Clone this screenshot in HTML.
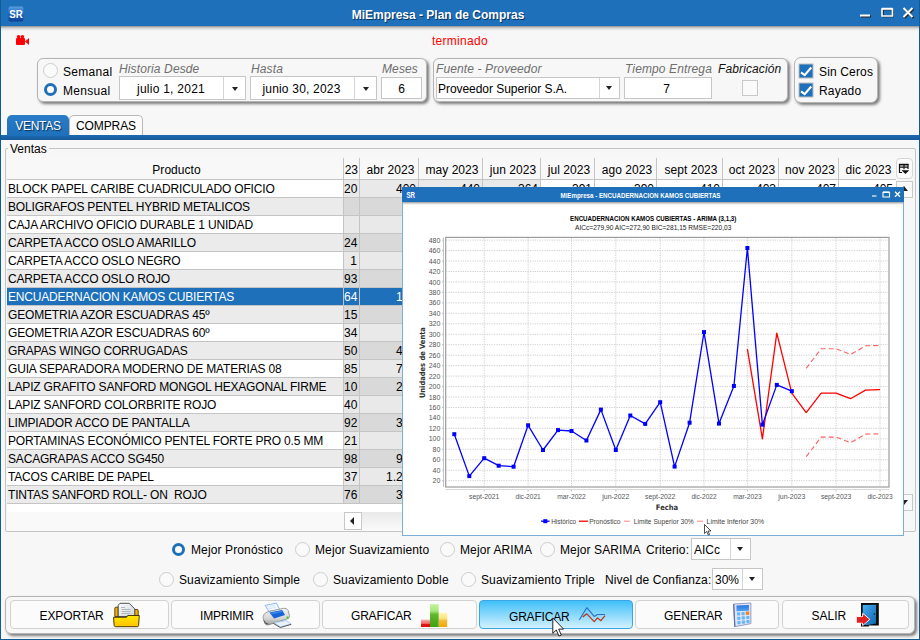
<!DOCTYPE html>
<html lang="es"><head><meta charset="utf-8"><title>MiEmpresa - Plan de Compras</title>
<style>
*{box-sizing:border-box;margin:0;padding:0}
html,body{width:920px;height:640px;overflow:hidden;background:#f7f7f7;font-family:"Liberation Sans",sans-serif;font-size:12px;color:#000}
.a{position:absolute}
#win{position:absolute;left:0;top:0;width:920px;height:640px;background:#f7f7f7;border-left:1px solid #0f5c92;border-right:1px solid #0f5c92;border-bottom:1px solid #0f5c92}
#tb{left:0;top:0;width:920px;height:26px;background:#1d70b9}
#tb .t{left:0;width:874px;top:7px;text-shadow:1px 1px 0 #0b3561;text-align:center;color:#fff;font-weight:bold;font-size:12px;line-height:16px}
.panel{border:1px solid #b4b4b4;border-radius:6px;background:#f7f7f7;box-shadow:2px 2px 3px rgba(0,0,0,.5)}
.fld{background:#fff;border:1px solid #c6c6c6;font-size:12px;line-height:21px;text-align:center;white-space:nowrap}
.lbl{letter-spacing:.12px;font-style:italic;color:#6e6e6e;font-size:12px;line-height:14px;white-space:nowrap}
.txt{font-size:12px;line-height:14px;white-space:nowrap}
.radio{width:15px;height:15px;border-radius:50%;border:1px solid #cdcdcd;background:#fafafa}
.radio.on{width:13.5px;height:13.5px;margin:.75px;border:3.200px solid #1d70b9;background:#fff}
.chk{width:16px;height:16px;background:#1d70b9;border:1px solid #165a96}
.arr{width:0;height:0;border-left:3.5px solid transparent;border-right:3.5px solid transparent;border-top:4px solid #222}
.r{left:0;width:889px;height:18px}
.c{top:0;height:17px;line-height:19px;text-align:right;padding-right:2px;white-space:pre;overflow:hidden}
.r{border-bottom:1px solid #c4c4c4}
</style></head><body>
<div id="win"></div>
<!-- title bar -->
<div id="tb" class="a" style="left:1px;width:918px"><div class="a t">MiEmpresa - Plan de Compras</div></div>
<div class="a" style="left:1px;top:26px;width:918px;height:5px;background:linear-gradient(#8a8a8a,#bdbdbd 25%,#e0e0e0 55%,#f7f7f7)"></div>
<svg class="a" style="left:8px;top:6px" width="16" height="16" viewBox="0 0 16 16">
<defs><linearGradient id="lg" x1="0" y1="0" x2="0" y2="1"><stop offset="0" stop-color="#5a9fe0"/><stop offset=".5" stop-color="#1e66c4"/><stop offset="1" stop-color="#0f3f96"/></linearGradient></defs>
<rect x=".5" y=".5" width="15" height="15" rx="2" fill="url(#lg)"/>
<text x="8" y="12" text-anchor="middle" font-family="Liberation Sans,sans-serif" font-weight="bold" font-size="11.5" fill="#fff" textLength="13.5" lengthAdjust="spacingAndGlyphs">SR</text>
</svg>
<svg class="a" style="left:856px;top:4px" width="62" height="18" viewBox="0 0 62 18">
<g fill="none" stroke="#222" stroke-width="2"><path d="M5 12.5h10" /><path d="M27 5.5h10v7h-10z" stroke-width="1.6"/><path d="M48.5 5l9 9M57.500 5l-9 9"/></g>
<g fill="none" stroke="#fff" stroke-width="2"><path d="M4 11.500h10" /><path d="M26 5h10.500v7h-10.500z" stroke-width="1.600"/><path d="M26 4.500h10.500" stroke-width="1.500"/><path d="M47.500 4l9 9M56.500 4l-9 9"/></g>
</svg>
<svg class="a" style="left:16px;top:35px" width="14" height="11" viewBox="0 0 14 11"><g fill="#f00"><circle cx="2.600" cy="1.800" r="1.800"/><circle cx="6.400" cy="1.800" r="1.800"/><rect x="0" y="3" width="9" height="7" rx="1"/><path d="M9 6.500L13 3v7z"/></g></svg>
<div class="a txt" style="left:432px;top:34px;color:#f00;letter-spacing:.28px">terminado</div>
<!--TITLEICONS-->
<div class="a panel" style="left:37px;top:58px;width:390px;height:44px"></div>
<div class="a radio" style="left:43px;top:63px"></div>
<div class="a radio on" style="left:43px;top:82px"></div>
<div class="a txt" style="left:63px;top:65px;letter-spacing:.3px">Semanal</div>
<div class="a txt" style="left:63px;top:84px;letter-spacing:.3px">Mensual</div>
<div class="a lbl" style="left:119px;top:62px">Historia Desde</div>
<div class="a fld" style="left:119px;top:76px;width:127px;height:24px"><div class="a" style="left:0;top:2px;width:102px;letter-spacing:.25px">julio 1, 2021</div><div class="a" style="left:103px;top:0;width:1px;height:22px;background:#d4d4d4"></div><div class="a arr" style="left:112px;top:10px"></div></div>
<div class="a lbl" style="left:251px;top:62px">Hasta</div>
<div class="a fld" style="left:250px;top:76px;width:127px;height:24px"><div class="a" style="left:0;top:2px;width:101px;letter-spacing:.2px">junio 30, 2023</div><div class="a" style="left:103px;top:0;width:1px;height:22px;background:#d4d4d4"></div><div class="a arr" style="left:112px;top:10px"></div></div>
<div class="a lbl" style="left:382px;top:62px">Meses</div>
<div class="a fld" style="left:381px;top:77px;width:41px;height:22px;line-height:22px">6</div>

<div class="a panel" style="left:433px;top:58px;width:355px;height:44px"></div>
<div class="a lbl" style="left:436px;top:62px">Fuente - Proveedor</div>
<div class="a fld" style="left:436px;top:77px;width:184px;height:22px;text-align:left;line-height:20px"><div class="a" style="left:1px;top:1px;letter-spacing:-.05px">Proveedor Superior S.A.</div><div class="a" style="left:162px;top:0;width:1px;height:20px;background:#d4d4d4"></div><div class="a arr" style="left:169px;top:8px"></div></div>
<div class="a lbl" style="left:625px;top:62px">Tiempo Entrega</div>
<div class="a fld" style="left:624px;top:77px;width:88px;height:22px;line-height:22px;padding-right:3px">7</div>
<div class="a lbl" style="left:718px;top:62px;color:#111">Fabricación</div>
<div class="a" style="left:742px;top:80px;width:16px;height:16px;border:1px solid #c8c8c8;background:#fafafa"></div>

<div class="a panel" style="left:794px;top:57px;width:84px;height:46px;border-radius:7px"></div>
<svg class="a" style="left:798px;top:63px" width="16" height="16" viewBox="0 0 16 16"><rect x=".5" y=".5" width="15" height="15" fill="#bcbcbc"/><rect x="1.500" y="1.500" width="13" height="13" fill="#1d70b9"/><path d="M3 9.300l3.700 2.800L13.200 4.500" fill="none" stroke="#fff" stroke-width="2.200"/></svg>
<svg class="a" style="left:798px;top:82px" width="16" height="16" viewBox="0 0 16 16"><rect x=".5" y=".5" width="15" height="15" fill="#bcbcbc"/><rect x="1.500" y="1.500" width="13" height="13" fill="#1d70b9"/><path d="M3 9.300l3.700 2.800L13.200 4.500" fill="none" stroke="#fff" stroke-width="2.200"/></svg>
<div class="a txt" style="left:819px;top:65px;letter-spacing:.15px">Sin Ceros</div>
<div class="a txt" style="left:819px;top:84px;letter-spacing:.15px">Rayado</div>
<!--TOP-->
<div class="a" style="left:1px;top:135px;width:918px;height:5px;background:linear-gradient(#1c6ab2,#195a9b)"></div>
<div class="a" style="left:7px;top:115px;width:62px;height:21px;background:linear-gradient(#2a7cc6,#1d70b9);border-radius:5px 5px 0 0;color:#fff;text-align:center;line-height:22px;letter-spacing:-.25px;text-shadow:1px 1px 1px #0a2f55">VENTAS</div>
<div class="a" style="left:69px;top:115px;width:74px;height:20px;background:#fbfbfb;border:1px solid #b8b8b8;border-bottom:none;border-radius:5px 5px 0 0;text-align:center;line-height:21px;letter-spacing:-.1px">COMPRAS</div>
<!--TABS-->
<div class="a" style="left:5px;top:148px;width:911px;height:384px;border:1px solid #c4c4c4;border-radius:2px"></div>
<div class="a txt" style="left:8px;top:142px;padding:0 2px;background:#f7f7f7">Ventas</div>
<div class="a" style="left:7px;top:158px;width:889px;height:22px;background:#f8f8f8;border-bottom:1px solid #c4c4c4"></div>
<div class="a txt" style="left:7px;top:163px;width:336px;text-align:center;overflow:hidden;padding-left:3px;letter-spacing:.05px">Producto</div>
<div class="a" style="left:343px;top:158px;width:1px;height:22px;background:#c4c4c4"></div>
<div class="a txt" style="left:343px;top:163px;width:15px;text-align:right;overflow:hidden">23</div>
<div class="a" style="left:359px;top:158px;width:1px;height:22px;background:#c4c4c4"></div>
<div class="a txt" style="left:360px;top:163px;width:58px;text-align:center;overflow:hidden;padding-left:3px;letter-spacing:.05px">abr 2023</div>
<div class="a" style="left:418px;top:158px;width:1px;height:22px;background:#c4c4c4"></div>
<div class="a txt" style="left:419px;top:163px;width:63px;text-align:center;overflow:hidden;padding-left:3px;letter-spacing:.05px">may 2023</div>
<div class="a" style="left:482px;top:158px;width:1px;height:22px;background:#c4c4c4"></div>
<div class="a txt" style="left:483px;top:163px;width:57px;text-align:center;overflow:hidden;padding-left:3px;letter-spacing:.05px">jun 2023</div>
<div class="a" style="left:540px;top:158px;width:1px;height:22px;background:#c4c4c4"></div>
<div class="a txt" style="left:541px;top:163px;width:53px;text-align:center;overflow:hidden;padding-left:3px;letter-spacing:.05px">jul 2023</div>
<div class="a" style="left:594px;top:158px;width:1px;height:22px;background:#c4c4c4"></div>
<div class="a txt" style="left:595px;top:163px;width:61px;text-align:center;overflow:hidden;padding-left:3px;letter-spacing:.05px">ago 2023</div>
<div class="a" style="left:656px;top:158px;width:1px;height:22px;background:#c4c4c4"></div>
<div class="a txt" style="left:657px;top:163px;width:65px;text-align:center;overflow:hidden;padding-left:3px;letter-spacing:.05px">sept 2023</div>
<div class="a" style="left:722px;top:158px;width:1px;height:22px;background:#c4c4c4"></div>
<div class="a txt" style="left:723px;top:163px;width:55px;text-align:center;overflow:hidden;padding-left:3px;letter-spacing:.05px">oct 2023</div>
<div class="a" style="left:778px;top:158px;width:1px;height:22px;background:#c4c4c4"></div>
<div class="a txt" style="left:779px;top:163px;width:59px;text-align:center;overflow:hidden;padding-left:3px;letter-spacing:.05px">nov 2023</div>
<div class="a" style="left:838px;top:158px;width:1px;height:22px;background:#c4c4c4"></div>
<div class="a txt" style="left:839px;top:163px;width:56px;text-align:center;overflow:hidden;padding-left:3px;letter-spacing:.05px">dic 2023</div>
<div class="a" style="left:7px;top:180px;width:889px;height:332px;background:#fff"></div>
<div class="a" style="left:7px;top:512px;width:889px;height:19px;background:#f9f9f9"></div>
<div class="a" style="left:362px;top:512px;width:534px;height:19px;background:linear-gradient(#e9e9e9,#fbfbfb)"></div>
<div class="a" style="left:7px;top:180px;width:889px;height:324px;overflow:hidden" id="tbl">
<div class="a r" style="top:0px;color:#000">
<div class="a c" style="left:0;width:336px;background:#fff;text-align:left;padding-left:1px;letter-spacing:-.18px">BLOCK PAPEL CARIBE CUADRICULADO OFICIO</div>
<div class="a c" style="left:337px;width:15px;background:#e9e9e9">20</div>
<div class="a c" style="left:353px;width:58px;background:#e9e9e9">400</div>
<div class="a c" style="left:412px;width:63px;background:#e9e9e9">440</div>
<div class="a c" style="left:476px;width:57px;background:#e9e9e9">364</div>
<div class="a c" style="left:534px;width:53px;background:#fff">391</div>
<div class="a c" style="left:588px;width:61px;background:#fff">390</div>
<div class="a c" style="left:650px;width:65px;background:#fff">410</div>
<div class="a c" style="left:716px;width:55px;background:#fff">403</div>
<div class="a c" style="left:772px;width:59px;background:#fff">407</div>
<div class="a c" style="left:832px;width:56px;background:#fff">405</div>
</div>
<div class="a r" style="top:18px;color:#000">
<div class="a c" style="left:0;width:336px;background:#ebebeb;text-align:left;padding-left:1px;letter-spacing:-.18px">BOLIGRAFOS PENTEL HYBRID METALICOS</div>
<div class="a c" style="left:337px;width:15px;background:#d9d9d9"></div>
<div class="a c" style="left:353px;width:58px;background:#d9d9d9"></div>
<div class="a c" style="left:412px;width:63px;background:#d9d9d9"></div>
<div class="a c" style="left:476px;width:57px;background:#d9d9d9"></div>
<div class="a c" style="left:534px;width:53px;background:#ebebeb"></div>
<div class="a c" style="left:588px;width:61px;background:#ebebeb"></div>
<div class="a c" style="left:650px;width:65px;background:#ebebeb"></div>
<div class="a c" style="left:716px;width:55px;background:#ebebeb"></div>
<div class="a c" style="left:772px;width:59px;background:#ebebeb"></div>
<div class="a c" style="left:832px;width:56px;background:#ebebeb"></div>
</div>
<div class="a r" style="top:36px;color:#000">
<div class="a c" style="left:0;width:336px;background:#fff;text-align:left;padding-left:1px;letter-spacing:-.18px">CAJA ARCHIVO OFICIO DURABLE 1 UNIDAD</div>
<div class="a c" style="left:337px;width:15px;background:#e9e9e9"></div>
<div class="a c" style="left:353px;width:58px;background:#e9e9e9"></div>
<div class="a c" style="left:412px;width:63px;background:#e9e9e9"></div>
<div class="a c" style="left:476px;width:57px;background:#e9e9e9"></div>
<div class="a c" style="left:534px;width:53px;background:#fff"></div>
<div class="a c" style="left:588px;width:61px;background:#fff"></div>
<div class="a c" style="left:650px;width:65px;background:#fff"></div>
<div class="a c" style="left:716px;width:55px;background:#fff"></div>
<div class="a c" style="left:772px;width:59px;background:#fff"></div>
<div class="a c" style="left:832px;width:56px;background:#fff"></div>
</div>
<div class="a r" style="top:54px;color:#000">
<div class="a c" style="left:0;width:336px;background:#ebebeb;text-align:left;padding-left:1px;letter-spacing:-.18px">CARPETA ACCO OSLO AMARILLO</div>
<div class="a c" style="left:337px;width:15px;background:#d9d9d9">24</div>
<div class="a c" style="left:353px;width:58px;background:#d9d9d9"></div>
<div class="a c" style="left:412px;width:63px;background:#d9d9d9"></div>
<div class="a c" style="left:476px;width:57px;background:#d9d9d9"></div>
<div class="a c" style="left:534px;width:53px;background:#ebebeb"></div>
<div class="a c" style="left:588px;width:61px;background:#ebebeb"></div>
<div class="a c" style="left:650px;width:65px;background:#ebebeb"></div>
<div class="a c" style="left:716px;width:55px;background:#ebebeb"></div>
<div class="a c" style="left:772px;width:59px;background:#ebebeb"></div>
<div class="a c" style="left:832px;width:56px;background:#ebebeb"></div>
</div>
<div class="a r" style="top:72px;color:#000">
<div class="a c" style="left:0;width:336px;background:#fff;text-align:left;padding-left:1px;letter-spacing:-.18px">CARPETA ACCO OSLO NEGRO</div>
<div class="a c" style="left:337px;width:15px;background:#e9e9e9">1</div>
<div class="a c" style="left:353px;width:58px;background:#e9e9e9"></div>
<div class="a c" style="left:412px;width:63px;background:#e9e9e9"></div>
<div class="a c" style="left:476px;width:57px;background:#e9e9e9"></div>
<div class="a c" style="left:534px;width:53px;background:#fff"></div>
<div class="a c" style="left:588px;width:61px;background:#fff"></div>
<div class="a c" style="left:650px;width:65px;background:#fff"></div>
<div class="a c" style="left:716px;width:55px;background:#fff"></div>
<div class="a c" style="left:772px;width:59px;background:#fff"></div>
<div class="a c" style="left:832px;width:56px;background:#fff"></div>
</div>
<div class="a r" style="top:90px;color:#000">
<div class="a c" style="left:0;width:336px;background:#ebebeb;text-align:left;padding-left:1px;letter-spacing:-.18px">CARPETA ACCO OSLO ROJO</div>
<div class="a c" style="left:337px;width:15px;background:#d9d9d9">93</div>
<div class="a c" style="left:353px;width:58px;background:#d9d9d9"></div>
<div class="a c" style="left:412px;width:63px;background:#d9d9d9"></div>
<div class="a c" style="left:476px;width:57px;background:#d9d9d9"></div>
<div class="a c" style="left:534px;width:53px;background:#ebebeb"></div>
<div class="a c" style="left:588px;width:61px;background:#ebebeb"></div>
<div class="a c" style="left:650px;width:65px;background:#ebebeb"></div>
<div class="a c" style="left:716px;width:55px;background:#ebebeb"></div>
<div class="a c" style="left:772px;width:59px;background:#ebebeb"></div>
<div class="a c" style="left:832px;width:56px;background:#ebebeb"></div>
</div>
<div class="a r" style="top:108px;color:#fff">
<div class="a c" style="left:0;width:336px;background:#1d70b9;text-align:left;padding-left:1px;letter-spacing:-.18px">ENCUADERNACION KAMOS CUBIERTAS</div>
<div class="a c" style="left:337px;width:15px;background:#1d70b9">64</div>
<div class="a c" style="left:353px;width:58px;background:#1d70b9">128</div>
<div class="a c" style="left:412px;width:63px;background:#1d70b9"></div>
<div class="a c" style="left:476px;width:57px;background:#1d70b9"></div>
<div class="a c" style="left:534px;width:53px;background:#1d70b9"></div>
<div class="a c" style="left:588px;width:61px;background:#1d70b9"></div>
<div class="a c" style="left:650px;width:65px;background:#1d70b9"></div>
<div class="a c" style="left:716px;width:55px;background:#1d70b9"></div>
<div class="a c" style="left:772px;width:59px;background:#1d70b9"></div>
<div class="a c" style="left:832px;width:56px;background:#1d70b9"></div>
</div>
<div class="a r" style="top:126px;color:#000">
<div class="a c" style="left:0;width:336px;background:#ebebeb;text-align:left;padding-left:1px;letter-spacing:-.18px">GEOMETRIA AZOR ESCUADRAS 45º</div>
<div class="a c" style="left:337px;width:15px;background:#d9d9d9">15</div>
<div class="a c" style="left:353px;width:58px;background:#d9d9d9"></div>
<div class="a c" style="left:412px;width:63px;background:#d9d9d9"></div>
<div class="a c" style="left:476px;width:57px;background:#d9d9d9"></div>
<div class="a c" style="left:534px;width:53px;background:#ebebeb"></div>
<div class="a c" style="left:588px;width:61px;background:#ebebeb"></div>
<div class="a c" style="left:650px;width:65px;background:#ebebeb"></div>
<div class="a c" style="left:716px;width:55px;background:#ebebeb"></div>
<div class="a c" style="left:772px;width:59px;background:#ebebeb"></div>
<div class="a c" style="left:832px;width:56px;background:#ebebeb"></div>
</div>
<div class="a r" style="top:144px;color:#000">
<div class="a c" style="left:0;width:336px;background:#fff;text-align:left;padding-left:1px;letter-spacing:-.18px">GEOMETRIA AZOR ESCUADRAS 60º</div>
<div class="a c" style="left:337px;width:15px;background:#e9e9e9">34</div>
<div class="a c" style="left:353px;width:58px;background:#e9e9e9"></div>
<div class="a c" style="left:412px;width:63px;background:#e9e9e9"></div>
<div class="a c" style="left:476px;width:57px;background:#e9e9e9"></div>
<div class="a c" style="left:534px;width:53px;background:#fff"></div>
<div class="a c" style="left:588px;width:61px;background:#fff"></div>
<div class="a c" style="left:650px;width:65px;background:#fff"></div>
<div class="a c" style="left:716px;width:55px;background:#fff"></div>
<div class="a c" style="left:772px;width:59px;background:#fff"></div>
<div class="a c" style="left:832px;width:56px;background:#fff"></div>
</div>
<div class="a r" style="top:162px;color:#000">
<div class="a c" style="left:0;width:336px;background:#ebebeb;text-align:left;padding-left:1px;letter-spacing:-.18px">GRAPAS WINGO CORRUGADAS</div>
<div class="a c" style="left:337px;width:15px;background:#d9d9d9">50</div>
<div class="a c" style="left:353px;width:58px;background:#d9d9d9">462</div>
<div class="a c" style="left:412px;width:63px;background:#d9d9d9"></div>
<div class="a c" style="left:476px;width:57px;background:#d9d9d9"></div>
<div class="a c" style="left:534px;width:53px;background:#ebebeb"></div>
<div class="a c" style="left:588px;width:61px;background:#ebebeb"></div>
<div class="a c" style="left:650px;width:65px;background:#ebebeb"></div>
<div class="a c" style="left:716px;width:55px;background:#ebebeb"></div>
<div class="a c" style="left:772px;width:59px;background:#ebebeb"></div>
<div class="a c" style="left:832px;width:56px;background:#ebebeb"></div>
</div>
<div class="a r" style="top:180px;color:#000">
<div class="a c" style="left:0;width:336px;background:#fff;text-align:left;padding-left:1px;letter-spacing:-.18px">GUIA SEPARADORA MODERNO DE MATERIAS 08</div>
<div class="a c" style="left:337px;width:15px;background:#e9e9e9">85</div>
<div class="a c" style="left:353px;width:58px;background:#e9e9e9">713</div>
<div class="a c" style="left:412px;width:63px;background:#e9e9e9"></div>
<div class="a c" style="left:476px;width:57px;background:#e9e9e9"></div>
<div class="a c" style="left:534px;width:53px;background:#fff"></div>
<div class="a c" style="left:588px;width:61px;background:#fff"></div>
<div class="a c" style="left:650px;width:65px;background:#fff"></div>
<div class="a c" style="left:716px;width:55px;background:#fff"></div>
<div class="a c" style="left:772px;width:59px;background:#fff"></div>
<div class="a c" style="left:832px;width:56px;background:#fff"></div>
</div>
<div class="a r" style="top:198px;color:#000">
<div class="a c" style="left:0;width:336px;background:#ebebeb;text-align:left;padding-left:1px;letter-spacing:-.18px">LAPIZ GRAFITO SANFORD MONGOL HEXAGONAL FIRME</div>
<div class="a c" style="left:337px;width:15px;background:#d9d9d9">10</div>
<div class="a c" style="left:353px;width:58px;background:#d9d9d9">251</div>
<div class="a c" style="left:412px;width:63px;background:#d9d9d9"></div>
<div class="a c" style="left:476px;width:57px;background:#d9d9d9"></div>
<div class="a c" style="left:534px;width:53px;background:#ebebeb"></div>
<div class="a c" style="left:588px;width:61px;background:#ebebeb"></div>
<div class="a c" style="left:650px;width:65px;background:#ebebeb"></div>
<div class="a c" style="left:716px;width:55px;background:#ebebeb"></div>
<div class="a c" style="left:772px;width:59px;background:#ebebeb"></div>
<div class="a c" style="left:832px;width:56px;background:#ebebeb"></div>
</div>
<div class="a r" style="top:216px;color:#000">
<div class="a c" style="left:0;width:336px;background:#fff;text-align:left;padding-left:1px;letter-spacing:-.18px">LAPIZ SANFORD COLORBRITE ROJO</div>
<div class="a c" style="left:337px;width:15px;background:#e9e9e9">40</div>
<div class="a c" style="left:353px;width:58px;background:#e9e9e9"></div>
<div class="a c" style="left:412px;width:63px;background:#e9e9e9"></div>
<div class="a c" style="left:476px;width:57px;background:#e9e9e9"></div>
<div class="a c" style="left:534px;width:53px;background:#fff"></div>
<div class="a c" style="left:588px;width:61px;background:#fff"></div>
<div class="a c" style="left:650px;width:65px;background:#fff"></div>
<div class="a c" style="left:716px;width:55px;background:#fff"></div>
<div class="a c" style="left:772px;width:59px;background:#fff"></div>
<div class="a c" style="left:832px;width:56px;background:#fff"></div>
</div>
<div class="a r" style="top:234px;color:#000">
<div class="a c" style="left:0;width:336px;background:#ebebeb;text-align:left;padding-left:1px;letter-spacing:-.18px">LIMPIADOR ACCO DE PANTALLA</div>
<div class="a c" style="left:337px;width:15px;background:#d9d9d9">92</div>
<div class="a c" style="left:353px;width:58px;background:#d9d9d9">318</div>
<div class="a c" style="left:412px;width:63px;background:#d9d9d9"></div>
<div class="a c" style="left:476px;width:57px;background:#d9d9d9"></div>
<div class="a c" style="left:534px;width:53px;background:#ebebeb"></div>
<div class="a c" style="left:588px;width:61px;background:#ebebeb"></div>
<div class="a c" style="left:650px;width:65px;background:#ebebeb"></div>
<div class="a c" style="left:716px;width:55px;background:#ebebeb"></div>
<div class="a c" style="left:772px;width:59px;background:#ebebeb"></div>
<div class="a c" style="left:832px;width:56px;background:#ebebeb"></div>
</div>
<div class="a r" style="top:252px;color:#000">
<div class="a c" style="left:0;width:336px;background:#fff;text-align:left;padding-left:1px;letter-spacing:-.18px">PORTAMINAS ECONÓMICO PENTEL FORTE PRO 0.5 MM</div>
<div class="a c" style="left:337px;width:15px;background:#e9e9e9">21</div>
<div class="a c" style="left:353px;width:58px;background:#e9e9e9"></div>
<div class="a c" style="left:412px;width:63px;background:#e9e9e9"></div>
<div class="a c" style="left:476px;width:57px;background:#e9e9e9"></div>
<div class="a c" style="left:534px;width:53px;background:#fff"></div>
<div class="a c" style="left:588px;width:61px;background:#fff"></div>
<div class="a c" style="left:650px;width:65px;background:#fff"></div>
<div class="a c" style="left:716px;width:55px;background:#fff"></div>
<div class="a c" style="left:772px;width:59px;background:#fff"></div>
<div class="a c" style="left:832px;width:56px;background:#fff"></div>
</div>
<div class="a r" style="top:270px;color:#000">
<div class="a c" style="left:0;width:336px;background:#ebebeb;text-align:left;padding-left:1px;letter-spacing:-.18px">SACAGRAPAS ACCO SG450</div>
<div class="a c" style="left:337px;width:15px;background:#d9d9d9">98</div>
<div class="a c" style="left:353px;width:58px;background:#d9d9d9">956</div>
<div class="a c" style="left:412px;width:63px;background:#d9d9d9"></div>
<div class="a c" style="left:476px;width:57px;background:#d9d9d9"></div>
<div class="a c" style="left:534px;width:53px;background:#ebebeb"></div>
<div class="a c" style="left:588px;width:61px;background:#ebebeb"></div>
<div class="a c" style="left:650px;width:65px;background:#ebebeb"></div>
<div class="a c" style="left:716px;width:55px;background:#ebebeb"></div>
<div class="a c" style="left:772px;width:59px;background:#ebebeb"></div>
<div class="a c" style="left:832px;width:56px;background:#ebebeb"></div>
</div>
<div class="a r" style="top:288px;color:#000">
<div class="a c" style="left:0;width:336px;background:#fff;text-align:left;padding-left:1px;letter-spacing:-.18px">TACOS CARIBE DE PAPEL</div>
<div class="a c" style="left:337px;width:15px;background:#e9e9e9">37</div>
<div class="a c" style="left:353px;width:58px;background:#e9e9e9">1.226</div>
<div class="a c" style="left:412px;width:63px;background:#e9e9e9"></div>
<div class="a c" style="left:476px;width:57px;background:#e9e9e9"></div>
<div class="a c" style="left:534px;width:53px;background:#fff"></div>
<div class="a c" style="left:588px;width:61px;background:#fff"></div>
<div class="a c" style="left:650px;width:65px;background:#fff"></div>
<div class="a c" style="left:716px;width:55px;background:#fff"></div>
<div class="a c" style="left:772px;width:59px;background:#fff"></div>
<div class="a c" style="left:832px;width:56px;background:#fff"></div>
</div>
<div class="a r" style="top:306px;color:#000">
<div class="a c" style="left:0;width:336px;background:#ebebeb;text-align:left;padding-left:1px;letter-spacing:-.18px">TINTAS SANFORD ROLL- ON  ROJO</div>
<div class="a c" style="left:337px;width:15px;background:#d9d9d9">76</div>
<div class="a c" style="left:353px;width:58px;background:#d9d9d9">347</div>
<div class="a c" style="left:412px;width:63px;background:#d9d9d9"></div>
<div class="a c" style="left:476px;width:57px;background:#d9d9d9"></div>
<div class="a c" style="left:534px;width:53px;background:#ebebeb"></div>
<div class="a c" style="left:588px;width:61px;background:#ebebeb"></div>
<div class="a c" style="left:650px;width:65px;background:#ebebeb"></div>
<div class="a c" style="left:716px;width:55px;background:#ebebeb"></div>
<div class="a c" style="left:772px;width:59px;background:#ebebeb"></div>
<div class="a c" style="left:832px;width:56px;background:#ebebeb"></div>
</div>
<div class="a" style="left:336px;top:0;width:1px;height:324px;background:#c4c4c4"></div>
<div class="a" style="left:352px;top:0;width:1px;height:324px;background:#c4c4c4"></div>
<div class="a" style="left:411px;top:0;width:1px;height:324px;background:#c4c4c4"></div>
<div class="a" style="left:475px;top:0;width:1px;height:324px;background:#c4c4c4"></div>
<div class="a" style="left:533px;top:0;width:1px;height:324px;background:#c4c4c4"></div>
<div class="a" style="left:587px;top:0;width:1px;height:324px;background:#c4c4c4"></div>
<div class="a" style="left:649px;top:0;width:1px;height:324px;background:#c4c4c4"></div>
<div class="a" style="left:715px;top:0;width:1px;height:324px;background:#c4c4c4"></div>
<div class="a" style="left:771px;top:0;width:1px;height:324px;background:#c4c4c4"></div>
<div class="a" style="left:831px;top:0;width:1px;height:324px;background:#c4c4c4"></div>
</div>
<div class="a" style="left:344px;top:512px;width:18px;height:18px;background:#fff;border:1px solid #c8c8c8"><div class="a" style="left:5px;top:4px;width:0;height:0;border-top:4px solid transparent;border-bottom:4px solid transparent;border-right:4.500px solid #222"></div></div>
<div class="a" style="left:896px;top:158px;width:17px;height:21px;background:#fcfcfc;border:1px solid #d6d6d6;border-radius:4px"></div>
<svg class="a" style="left:896px;top:158px" width="18" height="22" viewBox="896 158 18 22"><path d="M899.500 173V164.700h8.500v4.300M899.500 167.200h8.500M904 164.700v4.500M899.500 172.500h2.500" fill="none" stroke="#111" stroke-width="1.200"/><path d="M899 164.500h9.500" stroke="#111" stroke-width="1.500"/><path d="M901.500 170.200h7.800l-3.900 3.900z" fill="#111"/></svg>
<div class="a" style="left:896px;top:181px;width:17px;height:17px;background:#fafafa;border:1px solid #c8c8c8"><div class="a" style="left:3px;top:4px;width:0;height:0;border-left:4px solid transparent;border-right:4px solid transparent;border-bottom:5px solid #222"></div></div>
<div class="a" style="left:896px;top:494px;width:17px;height:17px;background:#fafafa;border:1px solid #c8c8c8"><div class="a" style="left:3px;top:5px;width:0;height:0;border-left:4px solid transparent;border-right:4px solid transparent;border-top:5px solid #222"></div></div>
<!--TABLE-->
<!--POPUP_START-->
<div class="a" style="left:402px;top:187px;width:502px;height:349px;background:#fff;border:1px solid #7aaedb;border-top:none"></div>
<div class="a" style="left:402px;top:187px;width:502px;height:15px;background:#1d70b9"></div>
<div class="a" style="left:403px;top:202px;width:500px;height:3px;background:linear-gradient(#9a9a9a,#d8d8d8 50%,#fff)"></div>
<svg class="a" style="left:402px;top:187px" width="502" height="349" viewBox="402 187 502 349" font-family="Liberation Sans,sans-serif">
<rect x="406" y="190.500" width="9.500" height="8.500" rx="1" fill="#2a6cc8"/><text x="410.700" y="198" font-size="8.500" font-weight="bold" fill="#fff" text-anchor="middle" textLength="8.500" lengthAdjust="spacingAndGlyphs">SR</text>
<text x="560.500" y="198.200" font-size="7.600" font-weight="bold" fill="#fff" textLength="160" lengthAdjust="spacingAndGlyphs">MiEmpresa - ENCUADERNACION KAMOS CUBIERTAS</text>
<g stroke="#fff" fill="none" stroke-width="1.100"><path d="M872 196h4.500"/><path d="M883 192.500h6.500v4.500h-6.500z"/><path d="M883 192h6.500" stroke-width="1.300"/><path d="M895 191.800l5 5M900 191.800l-5 5" stroke-width="1.300"/></g>
<text x="653.200" y="220.800" font-size="7.600" font-weight="bold" fill="#000" text-anchor="middle" textLength="166.300" lengthAdjust="spacingAndGlyphs">ENCUADERNACION KAMOS CUBIERTAS - ARIMA (3,1,3)</text>
<text x="653.200" y="230.200" font-size="7.300" fill="#222" text-anchor="middle" textLength="156.300" lengthAdjust="spacingAndGlyphs">AICc=279,90 AIC=272,90 BIC=281,15 RMSE=220,03</text>
<rect x="445.700" y="237.400" width="443.300" height="249.600" fill="#fff" stroke="#9c9c9c" stroke-width="1.200"/>
<path d="M446 480.7H889 M446 470.2H889 M446 459.8H889 M446 449.3H889 M446 438.9H889 M446 428.4H889 M446 417.9H889 M446 407.5H889 M446 397.0H889 M446 386.6H889 M446 376.1H889 M446 365.6H889 M446 355.2H889 M446 344.7H889 M446 334.3H889 M446 323.8H889 M446 313.3H889 M446 302.9H889 M446 292.4H889 M446 282.0H889 M446 271.5H889 M446 261.0H889 M446 250.6H889 M446 240.1H889 M484.2 238V487 M528.1 238V487 M571.5 238V487 M615.8 238V487 M660.2 238V487 M704.0 238V487 M747.4 238V487 M791.8 238V487 M836.1 238V487 M880.0 238V487" stroke="#c8c8c8" stroke-width=".9" stroke-dasharray="1.200 1.200" fill="none"/>
<path d="M443.500 237.500V487" stroke="#c4c4c4" stroke-width="1" fill="none"/><path d="M445.500 489.500H889" stroke="#d8d8d8" stroke-width="1" fill="none"/>
<path d="M442 480.7h1.500 M442 470.2h1.500 M442 459.8h1.500 M442 449.3h1.500 M442 438.9h1.500 M442 428.4h1.500 M442 417.9h1.500 M442 407.5h1.500 M442 397.0h1.500 M442 386.6h1.500 M442 376.1h1.500 M442 365.6h1.500 M442 355.2h1.500 M442 344.7h1.500 M442 334.3h1.500 M442 323.8h1.500 M442 313.3h1.500 M442 302.9h1.500 M442 292.4h1.500 M442 282.0h1.500 M442 271.5h1.500 M442 261.0h1.500 M442 250.6h1.500 M442 240.1h1.500 M484.2 490v1.500 M528.1 490v1.500 M571.5 490v1.500 M615.8 490v1.500 M660.2 490v1.500 M704.0 490v1.500 M747.4 490v1.500 M791.8 490v1.500 M836.1 490v1.500 M880.0 490v1.500" stroke="#b0b0b0" stroke-width=".8" fill="none"/>
<g font-size="7" fill="#555" text-anchor="end">
<text x="440.400" y="483.2">20</text>
<text x="440.400" y="472.7">40</text>
<text x="440.400" y="462.3">60</text>
<text x="440.400" y="451.8">80</text>
<text x="440.400" y="441.4">100</text>
<text x="440.400" y="430.9">120</text>
<text x="440.400" y="420.4">140</text>
<text x="440.400" y="410.0">160</text>
<text x="440.400" y="399.5">180</text>
<text x="440.400" y="389.1">200</text>
<text x="440.400" y="378.6">220</text>
<text x="440.400" y="368.1">240</text>
<text x="440.400" y="357.7">260</text>
<text x="440.400" y="347.2">280</text>
<text x="440.400" y="336.8">300</text>
<text x="440.400" y="326.3">320</text>
<text x="440.400" y="315.8">340</text>
<text x="440.400" y="305.4">360</text>
<text x="440.400" y="294.9">380</text>
<text x="440.400" y="284.5">400</text>
<text x="440.400" y="274.0">420</text>
<text x="440.400" y="263.5">440</text>
<text x="440.400" y="253.1">460</text>
<text x="440.400" y="242.6">480</text>
</g>
<g font-size="7" fill="#555" text-anchor="middle">
<text x="484.2" y="499.200" textLength="30.4" lengthAdjust="spacingAndGlyphs">sept-2021</text>
<text x="528.1" y="499.200" textLength="25.2" lengthAdjust="spacingAndGlyphs">dic-2021</text>
<text x="571.5" y="499.200" textLength="28.5" lengthAdjust="spacingAndGlyphs">mar-2022</text>
<text x="615.8" y="499.200" textLength="27" lengthAdjust="spacingAndGlyphs">jun-2022</text>
<text x="660.2" y="499.200" textLength="30.4" lengthAdjust="spacingAndGlyphs">sept-2022</text>
<text x="704.0" y="499.200" textLength="25.2" lengthAdjust="spacingAndGlyphs">dic-2022</text>
<text x="747.4" y="499.200" textLength="28.5" lengthAdjust="spacingAndGlyphs">mar-2023</text>
<text x="791.8" y="499.200" textLength="27" lengthAdjust="spacingAndGlyphs">jun-2023</text>
<text x="836.1" y="499.200" textLength="30.4" lengthAdjust="spacingAndGlyphs">sept-2023</text>
<text x="880.0" y="499.200" textLength="25.2" lengthAdjust="spacingAndGlyphs">dic-2023</text>
</g>
<text x="667" y="509.500" font-family="DejaVu Sans Condensed,DejaVu Sans,sans-serif" font-size="7.500" font-weight="bold" fill="#333" text-anchor="middle" textLength="22.300" lengthAdjust="spacingAndGlyphs">Fecha</text>
<text transform="translate(425.200 362.600) rotate(-90)" font-family="DejaVu Sans Condensed,DejaVu Sans,sans-serif" font-size="7.500" font-weight="bold" fill="#333" text-anchor="middle" textLength="71" lengthAdjust="spacingAndGlyphs">Unidades de Venta</text>
<path d="M806.2 368.3 L821.2 348.8 L836.1 348.8 L850.6 354.4 L865.5 345.8 L880.0 345.5" stroke="#ff6060" stroke-width="1.100" stroke-dasharray="5 3" fill="none"/>
<path d="M806.2 456.6 L821.2 437.1 L836.1 437.1 L850.6 442.7 L865.5 434.1 L880.0 433.8" stroke="#ff6060" stroke-width="1.100" stroke-dasharray="5 3" fill="none"/>
<path d="M747.4 349.2 L762.4 438.8 L776.8 333.1 L791.8 393.1 L806.2 412.6 L821.2 393.1 L836.1 393.1 L850.6 398.7 L865.5 390.1 L880.0 389.7" stroke="#f00" stroke-width="1.300" fill="none" stroke-linejoin="round"/>
<path d="M454.3 434.2 L469.3 476.1 L484.2 458.2 L498.7 465.7 L513.6 466.7 L528.1 425.3 L543.0 450.0 L558.0 430.1 L571.5 431.0 L586.4 440.5 L600.9 409.6 L615.8 450.0 L630.3 415.5 L645.2 423.9 L660.2 402.2 L674.6 466.6 L689.6 422.7 L704.0 332.1 L719.0 423.6 L733.9 386.0 L747.4 248.0 L762.4 424.7 L776.8 384.9 L791.8 391.2" stroke="#00f" stroke-width="1.300" fill="none" stroke-linejoin="round"/>
<g fill="#00f"><rect x="452.3" y="432.2" width="4" height="4"/><rect x="467.3" y="474.1" width="4" height="4"/><rect x="482.2" y="456.2" width="4" height="4"/><rect x="496.7" y="463.7" width="4" height="4"/><rect x="511.6" y="464.7" width="4" height="4"/><rect x="526.1" y="423.3" width="4" height="4"/><rect x="541.0" y="448.0" width="4" height="4"/><rect x="556.0" y="428.1" width="4" height="4"/><rect x="569.5" y="429.0" width="4" height="4"/><rect x="584.4" y="438.5" width="4" height="4"/><rect x="598.9" y="407.6" width="4" height="4"/><rect x="613.8" y="448.0" width="4" height="4"/><rect x="628.3" y="413.5" width="4" height="4"/><rect x="643.2" y="421.9" width="4" height="4"/><rect x="658.2" y="400.2" width="4" height="4"/><rect x="672.6" y="464.6" width="4" height="4"/><rect x="687.6" y="420.7" width="4" height="4"/><rect x="702.0" y="330.1" width="4" height="4"/><rect x="717.0" y="421.6" width="4" height="4"/><rect x="731.9" y="384.0" width="4" height="4"/><rect x="745.4" y="246.0" width="4" height="4"/><rect x="760.4" y="422.7" width="4" height="4"/><rect x="774.8" y="382.9" width="4" height="4"/><rect x="789.8" y="389.2" width="4" height="4"/></g>
<path d="M541 521.200h8.600" stroke="#00f" stroke-width="1.300"/><rect x="543.300" y="519.200" width="4" height="4" fill="#00f"/>
<path d="M579 521.200h9" stroke="#f00" stroke-width="1.300"/>
<path d="M623.800 521.200h6M697 521.200h6" stroke="#ff8080" stroke-width="1"/>
<g font-size="7" fill="#444">
<text x="551.200" y="523.700" textLength="25" lengthAdjust="spacingAndGlyphs">Histórico</text>
<text x="589.200" y="523.700" textLength="31.300" lengthAdjust="spacingAndGlyphs">Pronóstico</text>
<text x="633.800" y="523.700" textLength="60" lengthAdjust="spacingAndGlyphs">Limite Superior 30%</text>
<text x="706.600" y="523.700" textLength="57.600" lengthAdjust="spacingAndGlyphs">Limite Inferior 30%</text>
</g>
<path d="M704.500 524.500v9l2.200-2 1.600 3.500 1.300-.6-1.600-3.400h3z" fill="#fff" stroke="#000" stroke-width=".7"/>
</svg>
<!--POPUP_END-->
<div class="a radio on" style="left:171.0px;top:542.0px"></div>
<div class="a txt" style="left:191px;top:542.5px;letter-spacing:.12px">Mejor Pronóstico</div>
<div class="a radio" style="left:295.0px;top:542.0px"></div>
<div class="a txt" style="left:315px;top:542.5px;letter-spacing:.12px">Mejor Suavizamiento</div>
<div class="a radio" style="left:440.0px;top:542.0px"></div>
<div class="a txt" style="left:460px;top:542.5px;letter-spacing:.12px">Mejor ARIMA</div>
<div class="a radio" style="left:539.5px;top:542.0px"></div>
<div class="a txt" style="left:560px;top:542.5px;letter-spacing:.12px">Mejor SARIMA</div>
<div class="a txt" style="left:646px;top:542.5px;letter-spacing:.12px">Criterio:</div>
<div class="a fld" style="left:691px;top:538px;width:60px;height:22px;line-height:20px;text-align:left"><div class="a" style="left:2px;top:1px">AICc</div><div class="a" style="left:38px;top:0;width:1px;height:20px;background:#d4d4d4"></div><div class="a arr" style="left:45px;top:8px"></div></div>
<div class="a radio" style="left:159.0px;top:572.0px"></div>
<div class="a txt" style="left:179px;top:572.5px;letter-spacing:.12px">Suavizamiento Simple</div>
<div class="a radio" style="left:313.0px;top:572.0px"></div>
<div class="a txt" style="left:333px;top:572.5px;letter-spacing:.12px">Suavizamiento Doble</div>
<div class="a radio" style="left:461.0px;top:572.0px"></div>
<div class="a txt" style="left:481px;top:572.5px;letter-spacing:.12px">Suavizamiento Triple</div>
<div class="a txt" style="left:605px;top:572.5px;letter-spacing:.12px">Nivel de Confianza:</div>
<div class="a fld" style="left:712px;top:568px;width:51px;height:22px;line-height:20px;text-align:left"><div class="a" style="left:2px;top:1px">30%</div><div class="a" style="left:29px;top:0;width:1px;height:20px;background:#d4d4d4"></div><div class="a arr" style="left:36px;top:8px"></div></div>
<div class="a panel" style="left:5px;top:596px;width:910px;height:38px;border-radius:6px"></div>
<div class="a" style="left:10px;top:600px;width:159px;height:29px;border-radius:4px;background:#fbfbfb;border:1px solid #d2d2d2"></div>
<div class="a txt" style="left:39.5px;top:609px;letter-spacing:-.1px">EXPORTAR</div>
<div class="a" style="left:171px;top:600px;width:149px;height:29px;border-radius:4px;background:#fbfbfb;border:1px solid #d2d2d2"></div>
<div class="a txt" style="left:200px;top:609px;letter-spacing:-.2px">IMPRIMIR</div>
<div class="a" style="left:322px;top:600px;width:155px;height:29px;border-radius:4px;background:#fbfbfb;border:1px solid #d2d2d2"></div>
<div class="a txt" style="left:351px;top:609px;letter-spacing:-.2px">GRAFICAR</div>
<div class="a" style="left:479px;top:600px;width:154px;height:29px;border-radius:4px;background:linear-gradient(#3fc0f9,#d4f1ff);border:1px solid #3ba6e6"></div>
<div class="a txt" style="left:509px;top:610px;letter-spacing:-.2px">GRAFICAR</div>
<div class="a" style="left:635px;top:600px;width:144px;height:29px;border-radius:4px;background:#fbfbfb;border:1px solid #d2d2d2"></div>
<div class="a txt" style="left:664px;top:609px;letter-spacing:-.1px">GENERAR</div>
<div class="a" style="left:782px;top:600px;width:127px;height:29px;border-radius:4px;background:#fbfbfb;border:1px solid #d2d2d2"></div>
<div class="a txt" style="left:811.5px;top:609px">SALIR</div>
<!--ICONS_START-->
<svg class="a" style="left:0;top:596px" width="920" height="44" viewBox="0 596 920 44">
<defs>
<linearGradient id="gy" x1="0" y1="0" x2="0" y2="1"><stop offset="0" stop-color="#ffe600"/><stop offset="1" stop-color="#ffc400"/></linearGradient>
<linearGradient id="gdoc" x1="0" y1="0" x2="1" y2="1"><stop offset="0" stop-color="#fdfdfd"/><stop offset="1" stop-color="#c9d3dd"/></linearGradient>
<linearGradient id="gr" x1="0" y1="0" x2="0" y2="1"><stop offset="0" stop-color="#f6b4b4"/><stop offset=".55" stop-color="#ee6060"/><stop offset=".6" stop-color="#e01818"/><stop offset="1" stop-color="#d81010"/></linearGradient>
<linearGradient id="gg" x1="0" y1="0" x2="0" y2="1"><stop offset="0" stop-color="#c4f39c"/><stop offset=".3" stop-color="#a6e67c"/><stop offset=".45" stop-color="#62b830"/><stop offset="1" stop-color="#3fa010"/></linearGradient>
<linearGradient id="go" x1="0" y1="0" x2="0" y2="1"><stop offset="0" stop-color="#fff6b0"/><stop offset=".4" stop-color="#fbe27a"/><stop offset=".55" stop-color="#f6b93a"/><stop offset="1" stop-color="#f0a800"/></linearGradient>
<linearGradient id="gpr" x1="0" y1="0" x2="0" y2="1"><stop offset="0" stop-color="#f4f4f4"/><stop offset=".6" stop-color="#d6d6d6"/><stop offset="1" stop-color="#9c9c9c"/></linearGradient>
<linearGradient id="gcs" x1="0" y1="0" x2="0" y2="1"><stop offset="0" stop-color="#2a72dc"/><stop offset="1" stop-color="#4ea4f4"/></linearGradient>
<linearGradient id="gdr" x1="0" y1="0" x2="1" y2="1"><stop offset="0" stop-color="#46b0ee"/><stop offset=".5" stop-color="#2a88d0"/><stop offset="1" stop-color="#0e6aa8"/></linearGradient>
</defs>
<!-- folder -->
<g stroke-linejoin="round">
<path d="M114.800 616.500V608.200q0-1 1-1h2.500v9.300zM134.500 616V609.500h2.700q1 0 1 1v5.500z" fill="#f4ae00" stroke="#3a2800" stroke-width=".8"/>
<path d="M118.200 616.500V605.300l1.700-2h9.300l5.600 5.600v7.600z" fill="url(#gdoc)" stroke="#2a2a2a" stroke-width=".8"/>
<path d="M121 607.500h4M121.500 609.500h9M121.500 611.500h9M121.500 613.500h9" stroke="#b4b8bc" stroke-width="1" fill="none"/>
<path d="M113.500 617.300h13l1.200-1.800h11.600l-.7 10q-.1 1.200-1.300 1.200h-21.800q-1.200 0-1.300-1.200z" fill="url(#gy)" stroke="#3a2800" stroke-width=".9"/>
</g>
<!-- printer -->
<g stroke-linejoin="round">
<path d="M265.200 605.400l11.200-2.300 3.300 6.400-10.900 1.800z" fill="#f4f8ff" stroke="#6fa8ee" stroke-width=".8"/>
<path d="M266.500 607.200l8.500-1.700M267.500 609l8.500-1.700" stroke="#cfe0f8" stroke-width=".7" fill="none"/>
<path d="M263.200 618.800q-.5-5.600 4.600-7l15.600-3.500q3.600-.7 4.800 2.300l1.300 5q.4 2.200-1.400 3l-19.600 6.300q-2.200.6-3.600-1.200z" fill="url(#gpr)" stroke="#7c7c7c" stroke-width=".7"/>
<path d="M264 620.500q1 3.600 4.200 3.600" stroke="#4a4a4a" stroke-width="1" fill="none"/>
<path d="M269.400 612.400l12.700-2.500 2.900 5.200-10.900 3.500z" fill="#1563d6"/>
<path d="M270.500 612.900l11.200-2.200.8 1.400-11 2.500z" fill="#3a86ea"/>
<path d="M274 622.600l12.500-2 4.600 3.400-10.800 3z" fill="#e8f2ff" stroke="#7eb2ee" stroke-width=".6"/>
<path d="M273.300 623.400l7 4.100 10.900-3.100" fill="none" stroke="#444" stroke-width=".9"/>
<circle cx="287.600" cy="617.700" r="1.100" fill="#3cc81c"/>
</g>
<!-- bars -->
<rect x="421" y="619.600" width="9" height="7.400" fill="url(#gr)"/>
<rect x="430" y="604.200" width="8.700" height="22.800" fill="url(#gg)"/>
<rect x="439" y="612.900" width="8.200" height="14.100" fill="url(#go)"/>
<!-- zigzag -->
<path d="M579.400 619.700L586.800 607.700 594.200 616.400 597.500 614.500H605" fill="none" stroke="#2a6fc4" stroke-width="1.200" stroke-linejoin="round"/>
<path d="M582.700 617L586.800 613.800 594.200 621.600 597.500 617.900 600.900 620.700 605 615.700" fill="none" stroke="#c23010" stroke-width="1.200" stroke-linejoin="round"/>
<!-- calculator -->
<g stroke-linejoin="round">
<path d="M733.700 604l17.200-1v20.600l-16 3.100z" fill="#dfe3f4" stroke="#7f8cba" stroke-width=".8"/>
<path d="M733.700 604l1.100 22.700" stroke="#5f6ea6" stroke-width="1.200"/>
<path d="M736.500 605.600l12.400-.6v5.700l-12.400.6z" fill="url(#gcs)"/>
<rect x="745.800" y="611.500" width="3.400" height="3.400" fill="#f08424"/>
<g fill="#62b8f8"><rect x="737" y="612.300" width="3.200" height="3.200" rx=".8"/><rect x="741.500" y="612" width="3.200" height="3.200" rx=".8"/>
<rect x="737.200" y="616.700" width="3.200" height="3.200" rx=".8"/><rect x="741.700" y="616.300" width="3.200" height="3.200" rx=".8"/><rect x="746.200" y="615.900" width="3.200" height="3.200" rx=".8"/>
<rect x="737.400" y="621.100" width="3.200" height="3.200" rx=".8"/><rect x="741.900" y="620.500" width="3.200" height="3.200" rx=".8"/><rect x="746.400" y="619.900" width="3.200" height="3.200" rx=".8"/></g>
</g>
<!-- exit -->
<path d="M861 603h17.800v22.500h-10v1.100h-7.800z" fill="#0a0a0a"/>
<path d="M862.700 605l13.400-.3v18.900l-9.500 1.600-3.900-1.200z" fill="url(#gdr)"/>
<circle cx="874.400" cy="614.100" r=".8" fill="#0a2a44"/>
<path d="M856.400 616.800h6.300v-3.400l7 5.900-7 6.200v-2.500h-6.300z" fill="#e02222" stroke="#fff" stroke-width="1" stroke-linejoin="round"/>
<path d="M856.900 617.300h6.300v-2.800l5.800 4.800-5.800 5.100v-1.900h-6.300z" fill="#e02222"/>
<!-- mouse cursor -->
<path d="M552.800 617.900v15.400l3.500-3.300 2.600 6 2.400-1-2.600-5.900h4.900z" fill="#fff" stroke="#222" stroke-width="1" stroke-linejoin="round"/>
</svg>
<!--ICONS_END-->
<!--BOTTOM-->
</body></html>
